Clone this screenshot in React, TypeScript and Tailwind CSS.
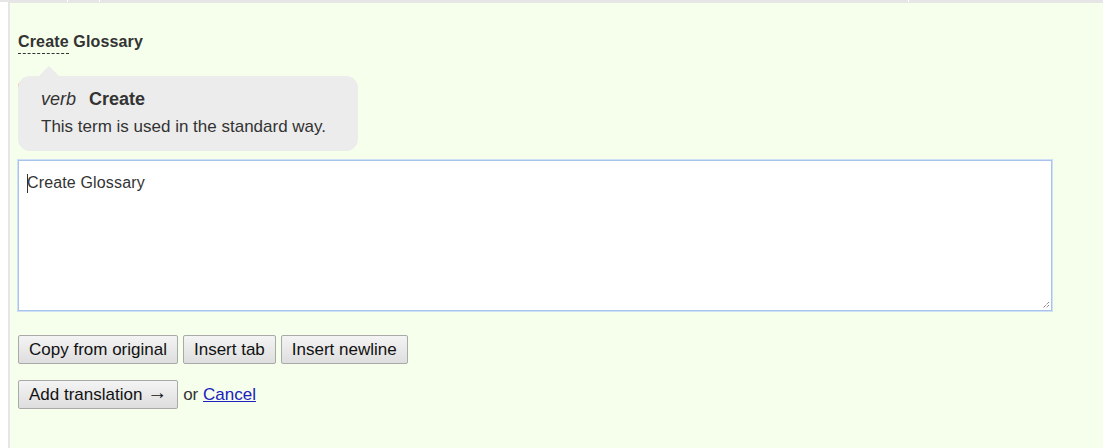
export default function App() {
  const btn =
    'h-[29px] px-[10px] border border-[#a9a9a9] rounded-[2px] bg-linear-to-b from-[#f4f4f4] to-[#dedede] text-[17px] text-[#111] leading-none';
  return (
    <div className="h-[448px] w-[1103px] bg-white font-['Liberation_Sans',Arial,sans-serif] overflow-hidden flex flex-col">
      {/* header row remnants */}
      <div className="flex h-[2px] gap-px bg-white">
        <div className="w-[67px] bg-[#e6e6e6]" />
        <div className="w-[31px] bg-[#e6e6e6]" />
        <div className="w-[808px] bg-[#e6e6e6]" />
        <div className="flex-1 bg-[#e6e6e6]" />
      </div>
      <div className="h-px bg-[#e6e6e6] ml-[8px]" />
      <div className="flex-1 ml-[8px] border-l-2 border-[#e6e6e6] bg-[#f5ffeb] pl-[8px] pt-[30px]">
        <div className="text-[16px] font-bold text-[#333] leading-[18px] tracking-[0.15px]">
          <span className="border-b border-dashed border-[#333] pb-[3px]">Create</span> Glossary
        </div>

        <div className="relative mt-[25px] h-[75px] w-[340px]">
          <div className="absolute left-0 top-[6px] size-[8px] rounded-full border-l-2 border-[#e9a25a]" />
          <div className="absolute left-[21px] top-[-10px] size-0 border-x-[10px] border-b-[10px] border-x-transparent border-b-[#ececec]" />
          <div className="absolute inset-0 rounded-[12px] bg-[#ececec] px-[23px] pt-[12px] text-[#333]">
            <div className="text-[18px] leading-[22px]">
              <i>verb</i>
              <b className="ml-[13px]">Create</b>
            </div>
            <div className="mt-[7px] text-[17px] leading-[20px]">This term is used in the standard way.</div>
          </div>
        </div>

        <div className="mt-[9px] h-[151px] w-[1034px] border border-[#a8c4ea] bg-white shadow-[0_0_0_1px_#cfdff5] relative">
          <div className="absolute left-[8px] top-[13px] h-[19px] w-px bg-[#333]" />
          <div className="pl-[8px] pt-[12px] text-[16px] leading-[20px] text-[#333] tracking-[0.15px]">Create Glossary</div>
          <svg className="absolute right-[1px] bottom-[1px]" width="9" height="9" viewBox="0 0 9 9">
            <path d="M8 2 L2 8 M8 5 L5 8" stroke="#555" strokeWidth="1" strokeDasharray="1 1" />
          </svg>
        </div>

        <div className="mt-[24px] flex gap-[5px]">
          <button className={btn}>Copy from original</button>
          <button className={btn}>Insert tab</button>
          <button className={btn}>Insert newline</button>
        </div>

        <div className="mt-[16px] flex items-center gap-[5px] text-[17px] text-[#333]">
          <button className={btn}>
            Add translation <span className="text-[20px] leading-[0] align-[1px]">→</span>
          </button>
          <span>
            or{' '}
            <a href="#" className="text-[#2020c0] underline">
              Cancel
            </a>
          </span>
        </div>
      </div>
    </div>
  );
}
